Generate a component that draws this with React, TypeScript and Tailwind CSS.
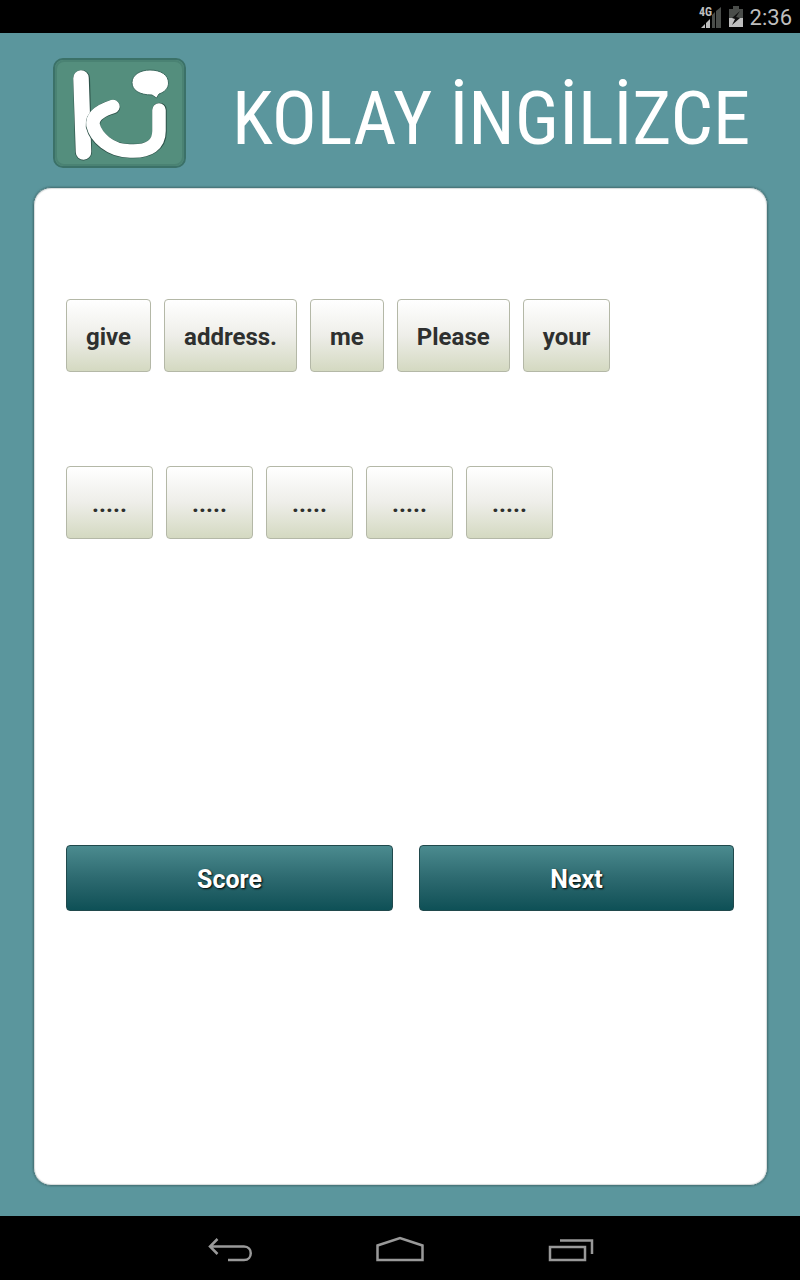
import React, { useState } from "react";

const WORDS = ["give", "address.", "me", "Please", "your"];
const BLANK = ".....";

function StatusBar() {
  return (
    <div className="flex h-[33px] items-center justify-end bg-black pr-2 text-[#bebebe]">
      <svg className="h-7 w-6 overflow-visible" viewBox="0 -3 24 28" role="img" aria-label="4G signal">
        <path d="M14 9 L17 6 V22 H14 Z M18 5 L23 1 V22 H18 Z" fill="#4a4d4a" />
        <path d="M3 22 L7 18 V22 Z M8 17 L12 13 V22 H8 Z" fill="#bebebe" />
        <text x="1" y="10" fontFamily="'Roboto Condensed', Roboto, sans-serif" fontSize="12" fontWeight="700" fill="#bebebe">
          4G
        </text>
      </svg>
      <svg className="ml-[6px] h-6 w-4" viewBox="0 -1 16 24" aria-hidden="true">
        <path d="M1 3 H5 V0 H11 V3 H15 V12 H1 Z" fill="#4a4d4a" />
        <path d="M1 12 H15 V21 H1 Z" fill="#bebebe" />
        <path d="M12 5 L4 12 L7 13 L4 19 L12 12 L8 11 Z" fill="#111" />
      </svg>
      <time className="ml-[6px] pt-[2px] text-[22px] leading-6">2:36</time>
    </div>
  );
}

function Logo() {
  return (
    <svg className="h-28 w-[136px] shrink-0" viewBox="12 7 136 112" role="img" aria-label="Kolay İngilizce logo">
      <rect x="14" y="9" width="131" height="108" rx="9" fill="#548e7d" stroke="#3b7168" strokeWidth="2" />
      <rect x="16" y="11" width="127" height="104" rx="8" fill="none" stroke="#4a8273" strokeWidth="2" />
      <g fill="none" strokeLinecap="round" strokeLinejoin="round">
        <path d="M41.500 28.500 L43.500 102" stroke="#2c5148" strokeWidth="17" />
        <path d="M41 28 L43.500 102" stroke="#fff" strokeWidth="15.500" />
        <path d="M73 57 C62 60 52 66 53 76 C56 88 70 101 90 101 C110 102 119.500 94 119.500 82 V60" stroke="#2c5148" strokeWidth="14.500" />
        <path d="M73 56.500 C62 60 52 66 53 75 C56 87 70 101 90 101 C110 102 119 94 119 81 V60" stroke="#fff" strokeWidth="13.500" />
      </g>
      <path
        d="M110 20 C121 20 128.500 25 128.500 33 C128.500 38 125 42 119 44 L116.500 48 L112 45 C99 45 92 40 92 32.500 C92 25 100 20 110 20 Z"
        fill="#fff"
        stroke="#3c6a5f"
        strokeWidth="1"
      />
    </svg>
  );
}

function Tile({ children, label, blank, onClick }: {
  children: React.ReactNode;
  label?: string;
  blank?: boolean;
  onClick?: () => void;
}) {
  return (
    <button
      type="button"
      aria-label={label}
      onClick={onClick}
      className={
        "h-[73px] rounded-[4px] border border-[#b4b8a7] bg-linear-to-b from-white via-[#eeeee9] to-[#d4d9c1] pt-[2px] text-2xl font-bold text-[#2e302f] " +
        (blank ? "w-[87px]" : "px-[19px]")
      }
    >
      {children}
    </button>
  );
}

const ACTION =
  "h-[66px] basis-0 rounded-[4px] border border-[#20494c] bg-linear-to-b from-[#4b8b8f] via-[#2d6a70] to-[#0d5056] pt-1 text-[25px] font-bold text-white [text-shadow:1px_1px_2px_#000]";

export default function App() {
  const [picked, setPicked] = useState<string[]>([]);

  return (
    <div className="flex min-h-screen flex-col bg-[#5b969d] font-[Roboto,sans-serif]">
      <StatusBar />

      <header className="flex h-[154px] items-center gap-11 pl-[52px] pt-[5px]">
        <Logo />
        <h1 className="whitespace-nowrap pt-3 font-['Roboto_Condensed',Roboto,sans-serif] text-[75px] leading-none text-white">
          KOLAY İNGİLİZCE
        </h1>
      </header>

      <main className="mb-[30px] ml-[33px] mr-8 flex-1 rounded-[18px] border border-[#48777c] bg-white pl-8 pr-[33px] pt-[111px] shadow-[0_0_1px_1px_#48777c80,inset_0_0_1px_1px_#d5dada]">
        <div className="flex flex-wrap gap-[13px]">
          {WORDS.map((word) => (
            <Tile
              key={word}
              onClick={() => setPicked((p) => (p.includes(word) ? p : [...p, word]))}
            >
              {word}
            </Tile>
          ))}
        </div>

        <div className="mt-[94px] flex flex-wrap gap-[13px]">
          {WORDS.map((_, i) => (
            <Tile
              key={i}
              blank={!picked[i]}
              label={picked[i] ?? `Blank ${i + 1}`}
              onClick={() => setPicked((p) => p.filter((_, n) => n !== i))}
            >
              {picked[i] ?? BLANK}
            </Tile>
          ))}
        </div>

        <div className="mt-[306px] flex gap-[26px]">
          <button type="button" className={ACTION + " grow-[327]"}>Score</button>
          <button type="button" className={ACTION + " grow-[315]"} onClick={() => setPicked([])}>Next</button>
        </div>
      </main>

      <nav className="flex h-16 items-center justify-center gap-[122px] bg-black pt-[3px]" aria-label="System">
        <button type="button" aria-label="Back">
          <svg className="h-8 w-12" viewBox="0 0 48 32" fill="none" stroke="#999" strokeWidth="2.500">
            <path d="M11.500 5 L4 12.500 L11.500 20 M4 12.500 H38 C47 12.500 47 26 38 26 H22" />
          </svg>
        </button>
        <button type="button" aria-label="Home">
          <svg className="h-8 w-12" viewBox="0 0 48 32" fill="none" stroke="#999" strokeWidth="2.500">
            <path d="M1.500 26 V11.500 L24 4 L46.500 11.500 V26 Z" />
          </svg>
        </button>
        <button type="button" aria-label="Recent apps">
          <svg className="h-8 w-12" viewBox="0 0 48 32" fill="none" stroke="#999" strokeWidth="2.500">
            <path d="M4 13 H39 V26 H4 Z M14 6.500 H46 V20" />
          </svg>
        </button>
      </nav>
    </div>
  );
}
